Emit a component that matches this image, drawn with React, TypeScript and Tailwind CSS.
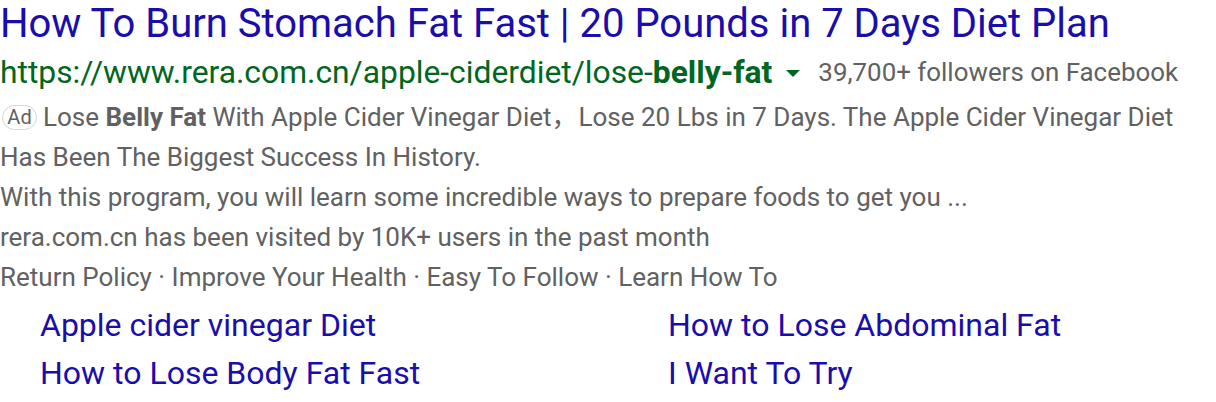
import React from "react";

export default function App() {
  return (
    <div className="bg-white w-[1216px] h-[402px] overflow-hidden" style={{ fontFamily: "Roboto, 'Noto Sans CJK SC', sans-serif" }}>
      <div className="text-[40px] leading-[48px] text-[#1a0dab] whitespace-nowrap">
        How To Burn Stomach Fat Fast | 20 Pounds in 7 Days Diet Plan
      </div>
      <div className="flex items-center h-[49px] whitespace-nowrap">
        <span className="text-[31.8px] leading-none text-[#006621]">
          https://www.rera.com.cn/apple-ciderdiet/lose-<b className="font-bold">belly-fat</b>
        </span>
        <span className="ml-[14px] mr-[18px] mt-[2px] w-0 h-0 border-l-[7px] border-r-[7px] border-t-[7px] border-l-transparent border-r-transparent border-t-[#006621]"></span>
        <span className="text-[25.9px] leading-none text-[#616161]">39,700+ followers on Facebook</span>
      </div>
      <div className="text-[26px] leading-[40px] text-[#616161]">
        <div className="whitespace-nowrap flex items-center">
          <span className="inline-flex items-center justify-center h-[25px] w-[35px] ml-[2px] mr-[6px] border border-[#d5d5d5] rounded-[13px] text-[20px] leading-none">Ad</span>
          <span>Lose <b className="font-bold">Belly Fat</b> With Apple Cider Vinegar Diet，<span className="ml-[1px]">Lose 20 Lbs in 7 Days. The Apple Cider Vinegar Diet</span></span>
        </div>
        <div>Has Been The Biggest Success In History.</div>
        <div>With this program, you will learn some incredible ways to prepare foods to get you ...</div>
        <div>rera.com.cn has been visited by 10K+ users in the past month</div>
        <div>Return Policy · Improve Your Health · Easy To Follow · Learn How To</div>
      </div>
      <div className="grid grid-cols-[628px_1fr] pl-[40px] pt-[4px] text-[32px] leading-[48px] text-[#1a0dab] whitespace-nowrap">
        <div>Apple cider vinegar Diet</div>
        <div>How to Lose Abdominal Fat</div>
        <div>How to Lose Body Fat Fast</div>
        <div>I Want To Try</div>
      </div>
    </div>
  );
}
